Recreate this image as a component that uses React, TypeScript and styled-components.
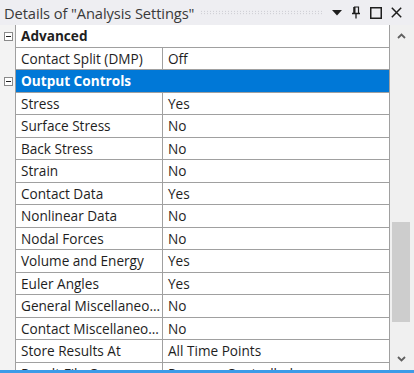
import React from "react";
import styled, { createGlobalStyle } from "styled-components";

const GlobalStyle = createGlobalStyle`
    html, body {
        margin: 0;
        padding: 0;
        overflow: hidden;
        background: #eeeef2;
    }
`;

const Panel = styled.div`
    width: 414px;
    height: 373px;
    display: flex;
    flex-direction: column;
    font-family: "Open Sans", "Noto Sans", sans-serif;
    color: #1e1e1e;
    background: #eeeef2;
    overflow: hidden;
`;

const TitleBar = styled.div`
    height: 25px;
    flex: none;
    display: flex;
    align-items: center;
    padding: 0 12px 0 4px;
    gap: 4px;
`;

const Title = styled.div`
    font-size: 14.7px;
    color: #3a3a3a;
    white-space: nowrap;
    letter-spacing: -0.1px;
`;

const Gripper = styled.div`
    flex: 1;
    height: 5px;
    margin: 0 4px 0 2px;
    background-image: radial-gradient(#c4c4cc 0.7px, transparent 0.8px);
    background-size: 3px 2.5px;
`;

const TitleIcons = styled.div`
    display: flex;
    align-items: center;
    gap: 9px;
`;

const Body = styled.div`
    flex: 1;
    display: flex;
    min-height: 0;
`;

const Grid = styled.div`
    width: 390px;
    flex: none;
    display: flex;
    flex-direction: column;
    background: #ffffff;
    border-right: 1px solid #a0a0a0;
    box-sizing: border-box;
    overflow: hidden;
`;

const Row = styled.div<{ $selected?: boolean }>`
    height: 22.5px;
    flex: none;
    display: grid;
    grid-template-columns: 16px 147px 1fr;
    font-size: 13.6px;
    background: ${(p) => (p.$selected ? "#0078d7" : "#ffffff")};
    color: ${(p) => (p.$selected ? "#ffffff" : "#1e1e1e")};
`;

const Gutter = styled.div`
    background: #f3f3f3;
    border-right: 1px solid #a0a0a0;
    display: flex;
    align-items: center;
    justify-content: center;
`;

const Expander = styled.div`
    width: 7px;
    height: 7px;
    border: 1px solid #8a8a8a;
    background: #ffffff;
    position: relative;
    margin-left: 1px;
    &::after {
        content: "";
        position: absolute;
        left: 1px;
        top: 3px;
        width: 5px;
        height: 1px;
        background: #222;
    }
`;

const GroupCell = styled.div`
    grid-column: 2 / 4;
    display: flex;
    align-items: center;
    padding-left: 5px;
    font-weight: 700;
    border-bottom: 1px solid #a0a0a0;
`;

const NameCell = styled.div`
    display: flex;
    align-items: center;
    padding-left: 5px;
    border-right: 1px solid #a0a0a0;
    border-bottom: 1px solid #a0a0a0;
    white-space: nowrap;
    overflow: hidden;
`;

const ValueCell = styled.div`
    display: flex;
    align-items: center;
    padding-left: 5px;
    border-bottom: 1px solid #a0a0a0;
    white-space: nowrap;
    overflow: hidden;
`;

const Scrollbar = styled.div`
    flex: 1;
    display: flex;
    flex-direction: column;
    align-items: center;
    background: #f0f0f0;
`;

const ArrowButton = styled.div`
    height: 22px;
    width: 100%;
    flex: none;
    display: flex;
    align-items: center;
    justify-content: center;
    padding-right: 2px;
    box-sizing: border-box;
`;

const Track = styled.div`
    flex: 1;
    width: 100%;
    display: flex;
    flex-direction: column;
    padding: 175px 4px 0 2px;
    box-sizing: border-box;
`;

const Thumb = styled.div`
    height: 100px;
    background: #cdcdcd;
`;

const BottomLine = styled.div`
    height: 3px;
    flex: none;
    background: #3c9be8;
`;

type Item =
    | { kind: "group"; name: string; selected?: boolean }
    | { kind: "prop"; name: string; value: string };

const items: Item[] = [
    { kind: "group", name: "Advanced" },
    { kind: "prop", name: "Contact Split (DMP)", value: "Off" },
    { kind: "group", name: "Output Controls", selected: true },
    { kind: "prop", name: "Stress", value: "Yes" },
    { kind: "prop", name: "Surface Stress", value: "No" },
    { kind: "prop", name: "Back Stress", value: "No" },
    { kind: "prop", name: "Strain", value: "No" },
    { kind: "prop", name: "Contact Data", value: "Yes" },
    { kind: "prop", name: "Nonlinear Data", value: "No" },
    { kind: "prop", name: "Nodal Forces", value: "No" },
    { kind: "prop", name: "Volume and Energy", value: "Yes" },
    { kind: "prop", name: "Euler Angles", value: "Yes" },
    { kind: "prop", name: "General Miscellaneo...", value: "No" },
    { kind: "prop", name: "Contact Miscellaneo...", value: "No" },
    { kind: "prop", name: "Store Results At", value: "All Time Points" },
    { kind: "prop", name: "Result File Compress...", value: "Program Controlled" },
];

function TitleButtons() {
    return (
        <TitleIcons>
            <svg width="10" height="6" viewBox="0 0 10 6">
                <polygon points="0,0 10,0 5,5.5" fill="#1e1e1e" />
            </svg>
            <svg width="10" height="13" viewBox="0 0 10 13">
                <path d="M3 1 H7.5 V7 M3 1 V7" stroke="#1e1e1e" strokeWidth="1.2" fill="none" />
                <rect x="2.5" y="1" width="2" height="6" fill="#1e1e1e" />
                <path d="M1 7.5 H9 M5 7.5 V12.5" stroke="#1e1e1e" strokeWidth="1.3" />
            </svg>
            <svg width="12" height="12" viewBox="0 0 12 12">
                <rect x="0.75" y="0.75" width="10.5" height="10.5" stroke="#1e1e1e" strokeWidth="1.5" fill="none" />
            </svg>
            <svg width="11" height="11" viewBox="0 0 11 11">
                <path d="M0.8 0.8 L10.2 10.2 M10.2 0.8 L0.8 10.2" stroke="#1e1e1e" strokeWidth="1.5" />
            </svg>
        </TitleIcons>
    );
}

export default function App() {
    return (
        <>
            <GlobalStyle />
            <Panel>
                <TitleBar>
                    <Title>Details of "Analysis Settings"</Title>
                    <Gripper />
                    <TitleButtons />
                </TitleBar>
                <Body>
                    <Grid>
                        {items.map((item, i) =>
                            item.kind === "group" ? (
                                <Row key={i} $selected={item.selected}>
                                    <Gutter>
                                        <Expander />
                                    </Gutter>
                                    <GroupCell>{item.name}</GroupCell>
                                </Row>
                            ) : (
                                <Row key={i}>
                                    <Gutter />
                                    <NameCell>{item.name}</NameCell>
                                    <ValueCell>{item.value}</ValueCell>
                                </Row>
                            )
                        )}
                    </Grid>
                    <Scrollbar>
                        <ArrowButton>
                            <svg width="9" height="6" viewBox="0 0 9 6">
                                <polyline points="1,5 4.5,1.5 8,5" stroke="#606060" strokeWidth="1.8" fill="none" />
                            </svg>
                        </ArrowButton>
                        <Track>
                            <Thumb />
                        </Track>
                        <ArrowButton>
                            <svg width="9" height="6" viewBox="0 0 9 6">
                                <polyline points="1,1 4.5,4.5 8,1" stroke="#606060" strokeWidth="1.8" fill="none" />
                            </svg>
                        </ArrowButton>
                    </Scrollbar>
                </Body>
                <BottomLine />
            </Panel>
        </>
    );
}
